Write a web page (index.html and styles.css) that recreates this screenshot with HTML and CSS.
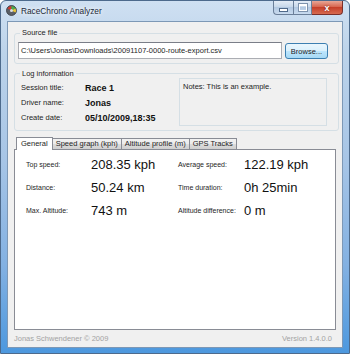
FILE: index.html
```html
<!DOCTYPE html>
<html lang="en">
<head>
  <meta charset="UTF-8">
  <title>RaceChrono Analyzer</title>
  <link rel="stylesheet" href="styles.css">
</head>
<body>
  <div class="window">
    <div class="titlebar">
      <svg class="app-icon" width="11" height="11" viewBox="0 0 22 22">
        <circle cx="11" cy="11" r="10" fill="#5a5f66" stroke="#2e3238" stroke-width="1.5"/>
        <path d="M11 11 L3 7 A9 9 0 0 1 11 2 Z" fill="#d23a2c"/>
        <path d="M11 11 L11 2 A9 9 0 0 1 19 7 Z" fill="#49b04a"/>
        <path d="M11 11 L19 7 A9 9 0 0 1 19 15 Z" fill="#e8c53a"/>
        <circle cx="11" cy="11" r="3" fill="#d9dde2"/>
      </svg>
      <span class="title">RaceChrono Analyzer</span>
      <div class="caption-buttons">
        <span class="cap min"><i></i></span>
        <span class="cap max"><i></i></span>
        <span class="cap close">x</span>
      </div>
    </div>

    <div class="client">
      <fieldset class="group source">
        <legend>Source file</legend>
        <div class="source-row">
          <div class="textbox">C:\Users\Jonas\Downloads\20091107-0000-route-export.csv</div>
          <button class="btn">Browse...</button>
        </div>
      </fieldset>

      <fieldset class="group log">
        <legend>Log information</legend>
        <div class="log-body">
          <div class="log-fields">
            <span class="label">Session title:</span><span class="value">Race 1</span>
            <span class="label">Driver name:</span><span class="value">Jonas</span>
            <span class="label">Create date:</span><span class="value">05/10/2009,18:35</span>
          </div>
          <div class="notes">Notes: This is an example.</div>
        </div>
      </fieldset>

      <div class="tabs">
        <div class="tab-strip">
          <span class="tab active">General</span>
          <span class="tab">Speed graph (kph)</span>
          <span class="tab">Altitude profile (m)</span>
          <span class="tab">GPS Tracks</span>
        </div>
        <div class="tab-panel">
          <div class="stats">
            <span class="stat-label">Top speed:</span><span class="stat-value">208.35 kph</span>
            <span class="stat-label">Average speed:</span><span class="stat-value">122.19 kph</span>
            <span class="stat-label">Distance:</span><span class="stat-value">50.24 km</span>
            <span class="stat-label">Time duration:</span><span class="stat-value">0h 25min</span>
            <span class="stat-label">Max. Altitude:</span><span class="stat-value">743 m</span>
            <span class="stat-label">Altitude difference:</span><span class="stat-value">0 m</span>
          </div>
        </div>
      </div>

      <div class="footer">
        <span>Jonas Schwendener © 2009</span>
        <span>Version 1.4.0.0</span>
      </div>
    </div>
  </div>
</body>
</html>
```

FILE: styles.css
```css
body {
  margin: 0;
  width: 350px;
  height: 354px;
  overflow: hidden;
  font-family: "Liberation Sans", Arial, sans-serif;
  background: #fff;
}

.window {
  box-sizing: border-box;
  height: 354px;
  padding: 0 6px 6px 6px;
  border: 1px solid #4d6a8c;
  border-radius: 6px 6px 0 0;
  background: linear-gradient(180deg, #cfe0f2 0%, #bcd3ea 15%, #a7c5e6 45%, #83b1e2 75%, #4d98de 100%);
}

.titlebar {
  height: 20px;
  display: flex;
  align-items: flex-start;
  margin-left: -1px;
}

.app-icon {
  margin-top: 4px;
}

.title {
  margin-left: 4px;
  margin-top: 5px;
  font-size: 8.3px;
  color: #1b2838;
  text-shadow: 0 0 4px #fff, 0 0 6px #fff;
}

.caption-buttons {
  margin-left: auto;
  margin-right: 0;
  display: flex;
}

.cap {
  box-sizing: border-box;
  height: 14px;
  border: 1px solid #6b7f99;
  border-top: none;
  display: flex;
  align-items: center;
  justify-content: center;
}

.cap.min,
.cap.max {
  width: 20px;
  background: linear-gradient(180deg, #e3ecf6 0%, #c8d8ea 45%, #b3c9e2 50%, #c9dbef 100%);
}

.cap.min {
  border-radius: 0 0 0 4px;
  border-right: none;
}

.cap.min i {
  width: 7px;
  height: 2px;
  margin-top: 5px;
  background: #fff;
  border: 1px solid #506a8a;
}

.cap.max {
  width: 19px;
}

.cap.max i {
  width: 6px;
  height: 4px;
  border: 1px solid #fff;
  border-top-width: 2px;
  outline: 1px solid #7d92ac;
}

.cap.close {
  width: 31px;
  border-color: #7a2f2a;
  border-left: none;
  border-radius: 0 0 4px 0;
  background: linear-gradient(180deg, #e8a696 0%, #d8664f 45%, #c6402a 50%, #d66a50 100%);
  color: #fff;
  font-size: 9px;
  font-weight: bold;
  text-shadow: 0 0 2px #6a1a12;
}

.client {
  box-sizing: border-box;
  height: 327px;
  margin-top: 0;
  background: #f0f0f0;
  border: 1px solid #7d98b6;
  padding-top: 6px;
}

.group {
  border: 1px solid #d5dfe5;
  border-radius: 3px;
  margin: 0 3px 0 6px;
  padding: 0 10px 4px 3px;
  min-width: 0;
}

.group legend {
  font-size: 7.5px;
  line-height: 10px;
  padding: 0 2px;
  margin-left: 2px;
  color: #1e1e1e;
}

.source-row {
  display: flex;
  gap: 3px;
  margin-top: 4px;
}

.textbox {
  box-sizing: border-box;
  width: 264px;
  height: 17px;
  border: 1px solid #abadb3;
  border-top-color: #7a7e88;
  background: #fff;
  font-size: 7.5px;
  line-height: 15px;
  padding-left: 2px;
  color: #1e1e1e;
  white-space: nowrap;
  overflow: hidden;
}

.btn {
  box-sizing: border-box;
  width: 43px;
  height: 16px;
  margin-top: 1px;
  padding: 0;
  border: 1px solid #3c7fb1;
  border-radius: 3px;
  background: linear-gradient(180deg, #eaf6fd 0%, #d9f0fc 50%, #bee6fd 50%, #a7d9f5 100%);
  font-family: "Liberation Sans", Arial, sans-serif;
  font-size: 7.5px;
  color: #1e1e1e;
}

.group.log {
  margin-top: 5px;
  padding-bottom: 4px;
}

.group.log legend {
  line-height: 9px;
}

.log-body {
  display: flex;
  align-items: flex-start;
}

.log-fields {
  display: grid;
  grid-template-columns: 64px 94px;
  grid-auto-rows: 15px;
  align-items: center;
  padding-top: 2px;
  padding-left: 3px;
}

.label {
  font-size: 7.5px;
  color: #1e1e1e;
}

.value {
  font-size: 9px;
  font-weight: bold;
  color: #111;
}

.notes {
  box-sizing: border-box;
  width: 148px;
  height: 48px;
  border: 1px solid #d5dfe5;
  font-size: 7.5px;
  padding: 3px 0 0 3px;
  color: #1e1e1e;
}

.tabs {
  margin: 6px 6px 0 6px;
}

.tab-strip {
  display: flex;
  align-items: flex-end;
  padding-left: 2px;
  height: 12px;
}

.tab {
  box-sizing: border-box;
  height: 11px;
  padding: 0 3px;
  margin-left: -1px;
  font-size: 7.5px;
  line-height: 10px;
  color: #1e1e1e;
  border: 1px solid #898c95;
  border-bottom: none;
  background: linear-gradient(180deg, #f2f2f2 0%, #ebebeb 50%, #dddddd 50%, #cfcfcf 100%);
  white-space: nowrap;
}

.tab:first-child {
  margin-left: 0;
}

.tab.active {
  position: relative;
  z-index: 1;
  height: 13px;
  margin-bottom: -1px;
  padding: 0 4px;
  line-height: 12px;
  background: #fff;
}

.tab-panel {
  box-sizing: border-box;
  height: 181px;
  background: #fff;
  border: 1px solid #898c95;
  padding: 3px 0 0 11px;
}

.stats {
  display: grid;
  grid-template-columns: 65px 87px 66px auto;
  grid-auto-rows: 23px;
  align-items: center;
}

.stat-label {
  font-size: 7px;
  color: #1e1e1e;
  white-space: nowrap;
}

.stat-value {
  font-size: 13px;
  color: #111;
}

.footer {
  display: flex;
  justify-content: space-between;
  margin: 4px 10px 0 6px;
  font-size: 7.5px;
  color: #a3a3a3;
}
```
